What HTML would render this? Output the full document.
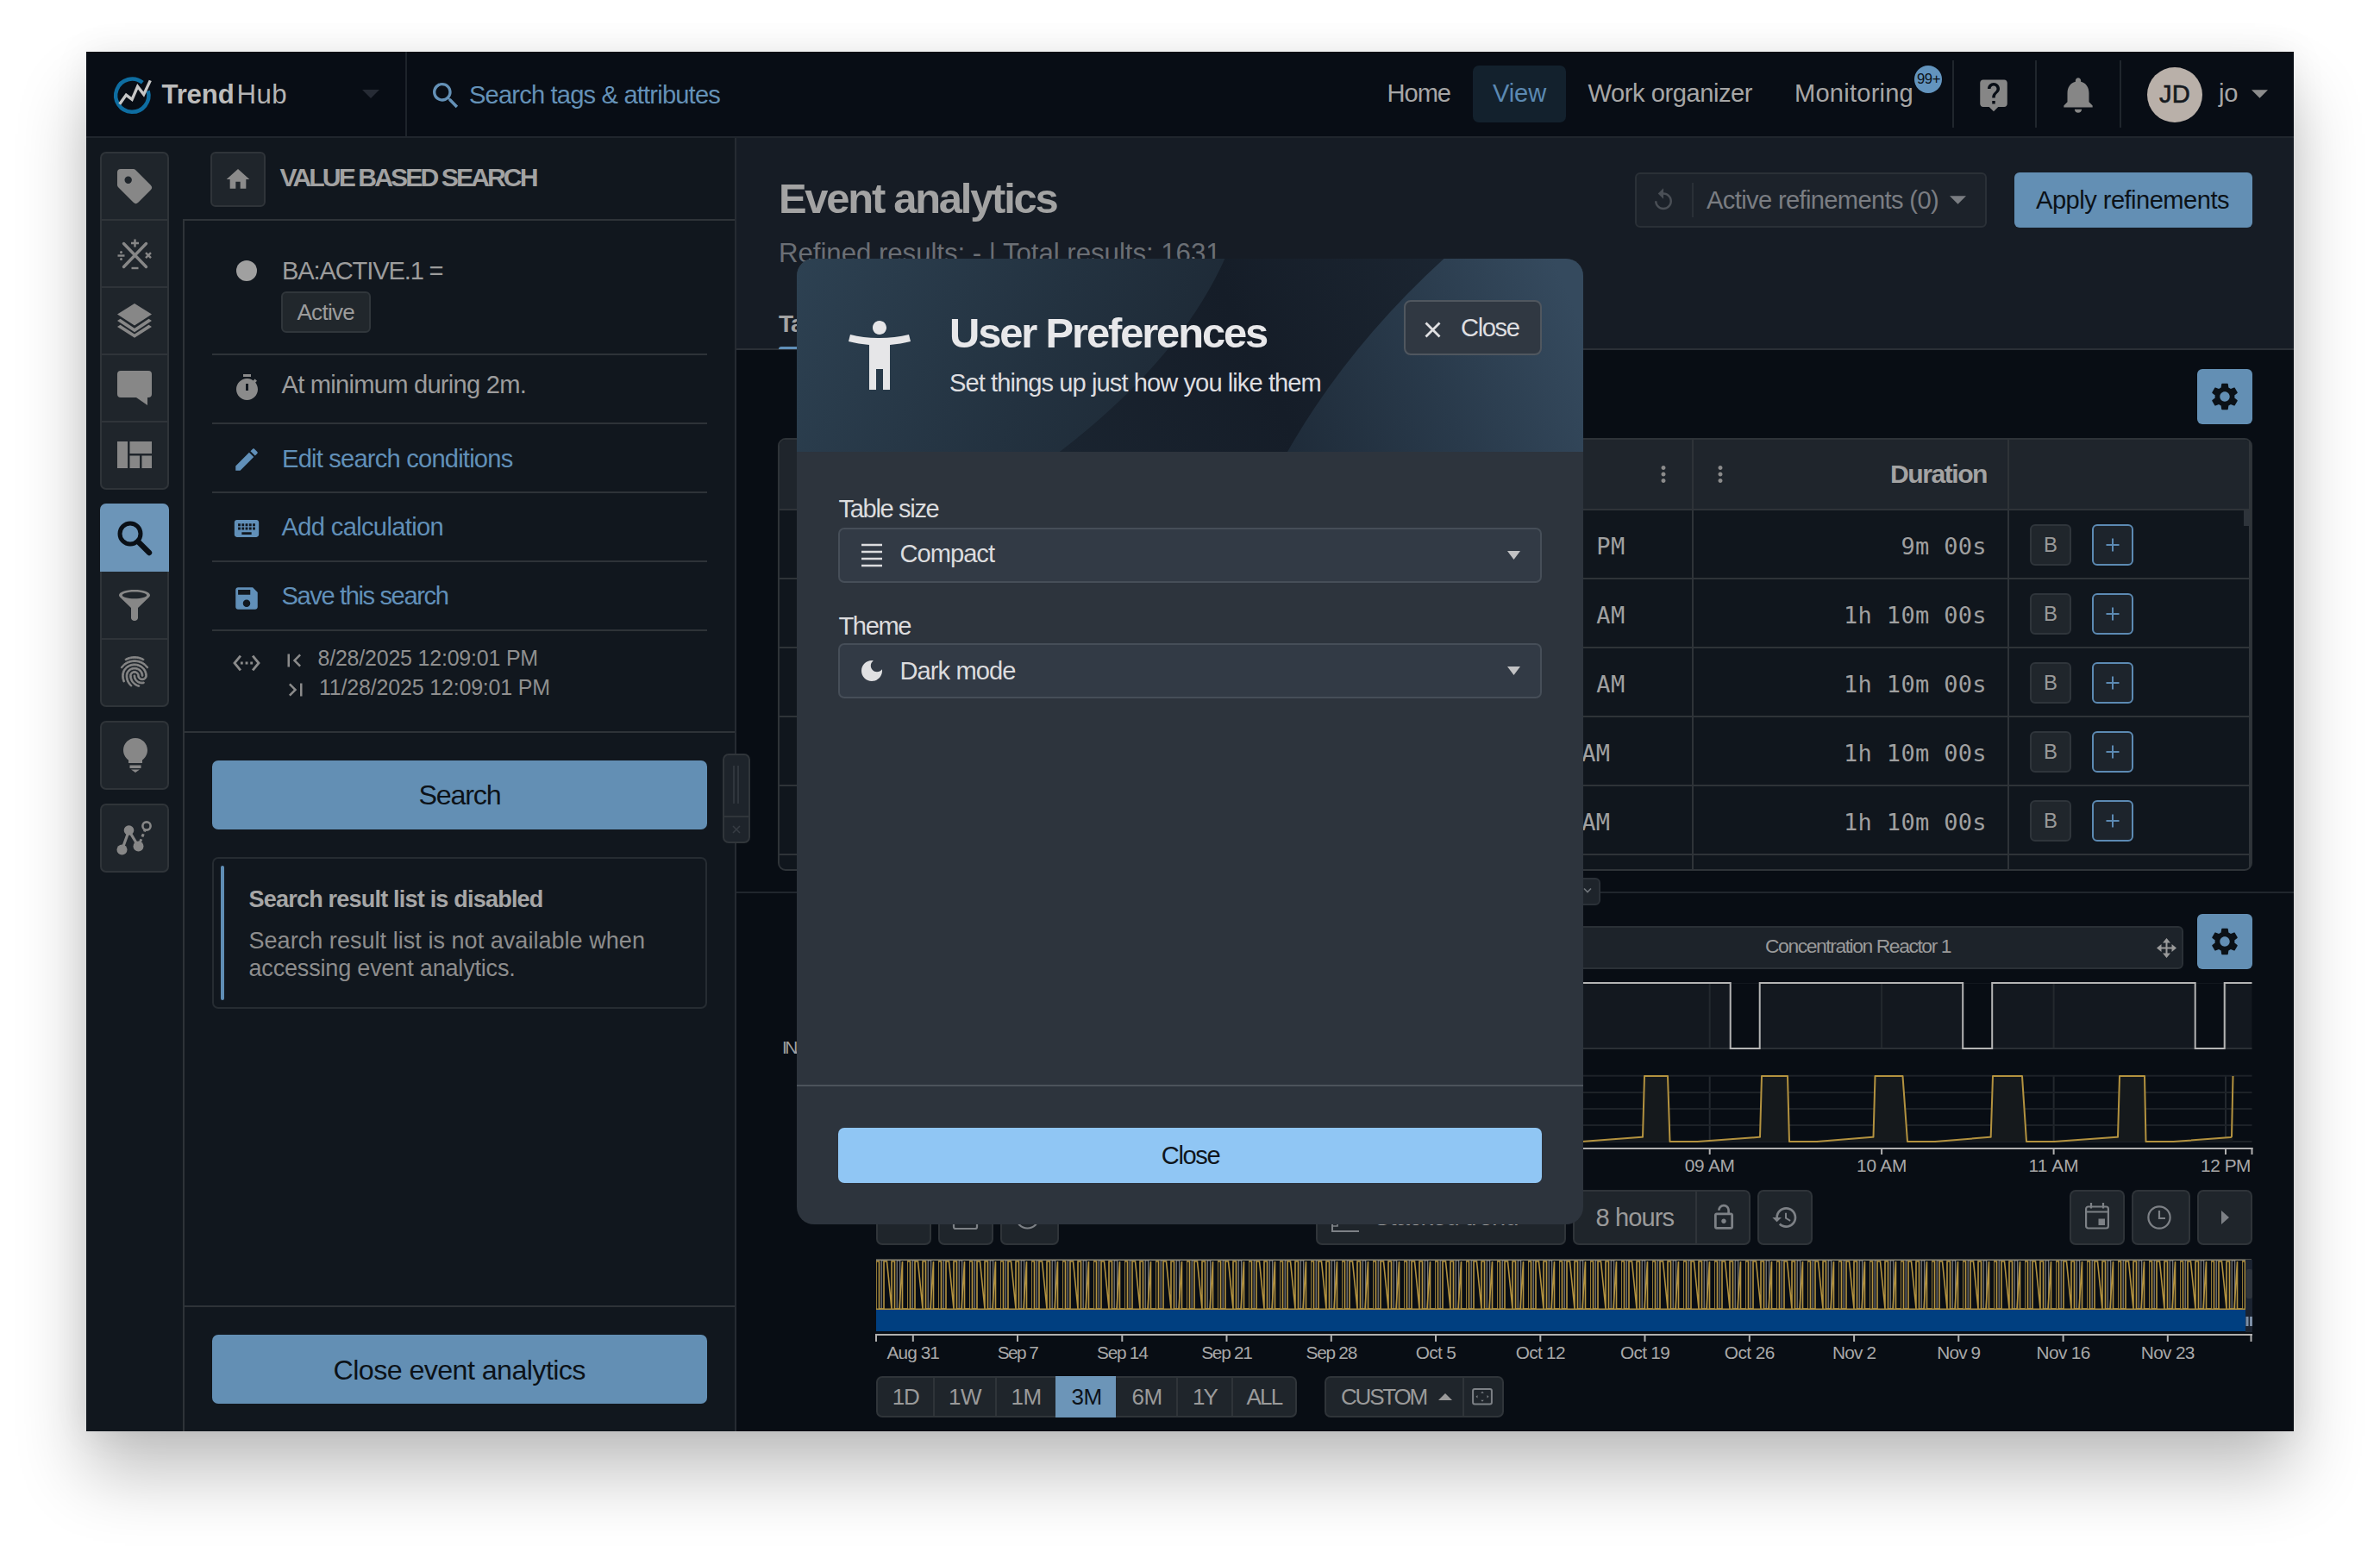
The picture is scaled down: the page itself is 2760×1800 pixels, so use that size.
<!DOCTYPE html>
<html lang="en">
<head>
<meta charset="utf-8">
<title>TrendHub - Event analytics</title>
<style>
*{box-sizing:border-box;margin:0;padding:0}
html,body{width:2760px;height:1800px;background:#fff;overflow:hidden}
body{position:relative;font-family:"Liberation Sans",sans-serif;color:#9d9d9d}
#win{position:absolute;left:100px;top:60px;width:2560px;height:1600px;overflow:hidden;background:#080d14;box-shadow:0 50px 76px rgba(0,0,0,.24),0 0 40px rgba(0,0,0,.07)}
#in{position:absolute;left:-100px;top:-60px;width:2760px;height:1800px}
.a{position:absolute}
.t{position:absolute;white-space:nowrap;line-height:1}
.b{font-weight:bold}
svg{position:absolute;overflow:visible}
.btn{position:absolute;background:#1f252b;border:2px solid #2f3439;border-radius:7px}
.hl{position:absolute;height:2px;background:#2e3338}
.vl{position:absolute;width:2px;background:#2e3338}
.mono{font-family:"DejaVu Sans Mono","Liberation Mono",monospace}
</style>
</head>
<body>
<div id="win"><div id="in">

<!-- ================= HEADER ================= -->
<div class="a" style="left:100px;top:60px;width:2560px;height:98px;background:#080d15"></div>
<div class="hl" style="left:100px;top:158px;width:2560px;background:#20262d"></div>
<div class="vl" style="left:470px;top:60px;height:98px;background:#1d232a"></div>

<!-- logo -->
<svg style="left:130px;top:88px" width="48" height="48" viewBox="130 88 48 48">
  <path d="M171.660 105.440 A19.100 19.100 0 1 1 165.320 95.860" fill="none" stroke="#0e6da1" stroke-width="4.500"/>
  <path d="M138.7 120.7 L146.3 110.1 L153.1 115.4 L159.6 100.3 L166.7 109.6 L174.3 93.4" fill="none" stroke="#c6c6c6" stroke-width="3.4" stroke-linejoin="miter"/>
</svg>
<span class="t b" style="left:187.5px;top:93.6px;letter-spacing:-0.18px;font-size:31.20px;color:#bcbcbc">Trend</span>
<span class="t" style="left:274.5px;top:93.6px;letter-spacing:0.43px;font-size:31.20px;color:#b4b4b4">Hub</span>
<svg style="left:420px;top:104px" width="20" height="10" viewBox="0 0 20 10"><path d="M0 0h20L10 10z" fill="#262b35"/></svg>
<!-- search -->
<svg style="left:496.500px;top:90.500px" width="40" height="40" viewBox="0 0 24 24"><path fill="#6491b7" d="M15.5 14h-.79l-.28-.27C15.41 12.59 16 11.11 16 9.5 16 5.91 13.09 3 9.5 3S3 5.91 3 9.5 5.91 16 9.5 16c1.61 0 3.09-.59 4.23-1.57l.27.28v.79l5 4.99L20.49 19l-4.99-5zm-6 0C7.01 14 5 11.99 5 9.5S7.01 5 9.5 5 14 7.01 14 9.5 11.99 14 9.5 14z"/></svg>
<span class="t" style="left:544.0px;top:95.8px;letter-spacing:-0.82px;font-size:29.12px;color:#6491b7">Search tags &amp; attributes</span>
<!-- nav -->
<span class="t" style="left:1608.5px;top:93.8px;letter-spacing:-1.04px;font-size:29.12px;color:#a6a6a6">Home</span>
<div class="a" style="left:1708px;top:76px;width:108px;height:66px;background:#13212d;border-radius:7px"></div>
<span class="t" style="left:1731.0px;top:93.8px;letter-spacing:-0.14px;font-size:29.12px;color:#5b89b2">View</span>
<span class="t" style="left:1841.5px;top:93.8px;letter-spacing:-0.45px;font-size:29.12px;color:#a6a6a6">Work organizer</span>
<span class="t" style="left:2081.0px;top:93.8px;letter-spacing:0.21px;font-size:29.12px;color:#a6a6a6">Monitoring</span>
<div class="a" style="left:2220px;top:76px;width:32px;height:32px;border-radius:16px;background:#6394be"></div>
<span class="t" style="left:2223.0px;top:83.9px;letter-spacing:-0.40px;font-size:16.64px;color:#0b1118">99+</span>
<div class="vl" style="left:2264px;top:70px;height:78px;background:#20262d"></div>
<div class="vl" style="left:2360px;top:70px;height:78px;background:#20262d"></div>
<div class="vl" style="left:2458px;top:70px;height:78px;background:#20262d"></div>
<svg style="left:2291px;top:89px" width="42" height="42" viewBox="0 0 24 24"><path fill="#868686" d="M19 2H5c-1.11 0-2 .9-2 2v14c0 1.1.89 2 2 2h4l3 3 3-3h4c1.1 0 2-.9 2-2V4c0-1.1-.9-2-2-2zm-6 16h-2v-2h2v2zm2.07-7.75l-.9.92C13.45 11.9 13 12.5 13 14h-2v-.5c0-1.1.45-2.1 1.17-2.83l1.24-1.26c.37-.36.59-.86.59-1.41 0-1.1-.9-2-2-2s-2 .9-2 2H8c0-2.21 1.79-4 4-4s4 1.79 4 4c0 .88-.36 1.68-.93 2.25z"/></svg>
<svg style="left:2385px;top:85px" width="50" height="50" viewBox="0 0 24 24"><path fill="#868686" d="M12 22c1.1 0 2-.9 2-2h-4c0 1.1.89 2 2 2zm6-6v-5c0-3.07-1.64-5.64-4.5-6.32V4c0-.83-.67-1.5-1.5-1.5s-1.5.67-1.5 1.5v.68C7.63 5.36 6 7.92 6 11v5l-2 2v1h16v-1l-2-2z"/></svg>
<div class="a" style="left:2490px;top:78px;width:64px;height:64px;border-radius:32px;background:#b9b0a9"></div>
<span class="t" style="left:2504.0px;top:95.3px;letter-spacing:0.21px;font-size:29.12px;color:#151a20;-webkit-text-stroke:.6px #151a20">JD</span>
<span class="t" style="left:2573.0px;top:93.8px;letter-spacing:-0.34px;font-size:29.12px;color:#a6a6a6">jo</span>
<svg style="left:2611px;top:104px" width="19" height="10" viewBox="0 0 20 10"><path d="M0 0h20L10 10z" fill="#8c8c8c"/></svg>


<!-- ================= SIDEBAR + LEFT PANEL BG ================= -->
<div class="a" style="left:100px;top:160px;width:752px;height:1500px;background:#11171e"></div>
<div class="vl" style="left:852px;top:160px;height:1500px;background:#262b32"></div>

<!-- sidebar groups -->
<div class="btn" style="left:116px;top:176px;width:80px;height:392px;border-radius:7px"></div>
<div class="hl" style="left:118px;top:254px;width:76px;background:#2f3439"></div>
<div class="hl" style="left:118px;top:332px;width:76px;background:#2f3439"></div>
<div class="hl" style="left:118px;top:410px;width:76px;background:#2f3439"></div>
<div class="hl" style="left:118px;top:488px;width:76px;background:#2f3439"></div>
<div class="btn" style="left:116px;top:584px;width:80px;height:236px;border-radius:7px"></div>
<div class="a" style="left:116px;top:584px;width:80px;height:79px;background:#6c95b8;border-radius:7px 7px 0 0"></div>
<div class="hl" style="left:118px;top:740px;width:76px;background:#2f3439"></div>
<div class="btn" style="left:116px;top:836px;width:80px;height:80px;border-radius:7px"></div>
<div class="btn" style="left:116px;top:932px;width:80px;height:80px;border-radius:7px"></div>
<!-- tag -->
<svg style="left:136px;top:196px" width="40" height="40" viewBox="0 0 40 40"><path fill="#878787" fill-rule="evenodd" d="M4 0H18.500a4 4 0 0 1 2.800 1.200L38.800 18.700a4 4 0 0 1 0 5.600L24.300 38.800a4 4 0 0 1-5.600 0L1.200 21.300A4 4 0 0 1 0 18.500V4a4 4 0 0 1 4-4ZM12.700 8.500a4.200 4.200 0 1 0 0 8.400a4.200 4.200 0 1 0 0-8.400Z"/></svg>
<!-- calc -->
<svg style="left:136px;top:275.500px" width="40" height="40" viewBox="0 0 40 40"><g stroke="#878787" stroke-width="3.4" stroke-linecap="round" fill="none"><path d="M7.5 6.5 L33.5 33.5 M33.5 6.5 L7.5 33.5"/></g><g stroke="#878787" stroke-width="2.4" fill="none"><path d="M20.5 1.5v9M16 6h9"/><path d="M16.5 35h8"/><path d="M0.5 20.5h8"/><path d="M33 17.2l6 6M39 17.2l-6 6"/></g><circle cx="4.5" cy="16.6" r="1.5" fill="#878787"/><circle cx="4.5" cy="24.4" r="1.5" fill="#878787"/></svg>
<!-- layers -->
<svg style="left:136px;top:352px" width="40" height="40" viewBox="0 0 40 40"><path fill="#878787" d="M20 0L40 12.600 20 25.600 0 12.600ZM0 20L20 33.300 40 20 36.500 17.800 20 28.800 3.500 17.800ZM0 27L20 39.800 40 27 36.500 24.800 20 35.400 3.500 24.800Z"/></svg>
<!-- chat -->
<svg style="left:136px;top:430px" width="40" height="40" viewBox="0 0 40 40"><path fill="#878787" d="M4 0h32a4 4 0 0 1 4 4v23a4 4 0 0 1-4 4h-1v9L22 31H4a4 4 0 0 1-4-4V4a4 4 0 0 1 4-4z"/></svg>
<!-- quilt -->
<svg style="left:136px;top:512px" width="40" height="31" viewBox="0 0 40 31"><path fill="#878787" d="M0 0h12v31H0zM14.500 0H40v14H14.500zM14.500 16.500h11.500V31H14.500zM28.500 16.500H40V31H28.500z"/></svg>
<!-- search (active) -->
<svg style="left:136px;top:604px" width="40" height="40" viewBox="0 0 40 40"><circle cx="15" cy="15" r="12" fill="none" stroke="#0a1017" stroke-width="5"/><path d="M24 24L37 37" stroke="#0a1017" stroke-width="6.400" stroke-linecap="round"/></svg>
<!-- funnel -->
<svg style="left:138px;top:684px" width="36" height="36" viewBox="0 0 36 36"><path fill="#878787" d="M18 0C8 0 0 2.600 0 6.200c0 1.100.700 2.100 1.800 3L14 21v11.500c0 2 1.800 3.500 4 3.500s4-1.500 4-3.500V21L34.200 9.200C35.300 8.300 36 7.300 36 6.200 36 2.600 28 0 18 0zm0 2.600c8.200 0 14.200 2 14.200 3.800S26.200 10.200 18 10.200 3.800 8.200 3.800 6.400 9.800 2.600 18 2.600z"/></svg>
<!-- fingerprint -->
<svg style="left:135px;top:758px" width="42" height="42" viewBox="0 0 24 24"><path fill="#878787" stroke="#878787" stroke-width=".500" d="M17.810 4.470c-.080 0-.160-.020-.230-.060C15.660 3.420 14 3 12.010 3c-1.980 0-3.860.470-5.570 1.410-.240.130-.540.040-.680-.200-.130-.240-.040-.550.200-.680C7.820 2.520 9.860 2 12.010 2c2.130 0 3.990.470 6.030 1.520.250.130.340.430.210.670-.090.180-.260.280-.440.280zM3.500 9.720c-.100 0-.200-.030-.290-.090-.230-.160-.280-.470-.120-.700.990-1.400 2.250-2.500 3.750-3.270C9.980 4.040 14 4.030 17.150 5.650c1.500.770 2.760 1.860 3.750 3.250.160.220.110.540-.120.700-.230.160-.540.110-.700-.120-.900-1.260-2.040-2.250-3.390-2.940-2.870-1.470-6.540-1.470-9.400.010-1.360.700-2.500 1.700-3.400 2.960-.080.140-.230.210-.390.210zm6.250 12.070c-.130 0-.260-.050-.350-.150-.870-.870-1.340-1.430-2.010-2.640-.690-1.230-1.050-2.730-1.050-4.340 0-2.970 2.540-5.390 5.660-5.390s5.660 2.420 5.660 5.390c0 .280-.220.500-.500.500s-.500-.220-.500-.500c0-2.420-2.090-4.390-4.660-4.390-2.570 0-4.660 1.970-4.660 4.390 0 1.440.320 2.770.930 3.850.640 1.150 1.080 1.640 1.850 2.420.190.200.190.510 0 .710-.110.100-.240.150-.370.150zm7.170-1.850c-1.190 0-2.240-.300-3.100-.890-1.490-1.010-2.380-2.650-2.380-4.390 0-.280.220-.500.500-.500s.500.220.500.500c0 1.410.720 2.740 1.940 3.560.710.480 1.540.710 2.540.710.240 0 .640-.030 1.040-.100.270-.050.530.130.580.410.050.270-.130.530-.410.580-.570.110-1.070.120-1.210.120zM14.910 22c-.040 0-.090-.010-.130-.020-1.590-.440-2.630-1.030-3.720-2.100-1.400-1.390-2.170-3.240-2.170-5.220 0-1.620 1.380-2.940 3.080-2.940 1.700 0 3.080 1.320 3.080 2.940 0 1.070.930 1.940 2.080 1.940s2.080-.870 2.080-1.940c0-3.770-3.250-6.830-7.250-6.830-2.840 0-5.440 1.580-6.610 4.030-.390.810-.590 1.760-.590 2.800 0 .780.070 2.010.670 3.610.100.260-.030.550-.290.640-.260.100-.550-.040-.640-.290-.490-1.310-.730-2.610-.730-3.960 0-1.200.230-2.290.680-3.240 1.330-2.790 4.280-4.600 7.510-4.600 4.550 0 8.250 3.510 8.250 7.830 0 1.620-1.380 2.940-3.080 2.940s-3.080-1.320-3.080-2.940c0-1.070-.930-1.940-2.080-1.940s-2.080.870-2.080 1.940c0 1.710.660 3.310 1.870 4.510.950.940 1.860 1.460 3.270 1.850.270.070.420.350.350.610-.050.230-.260.380-.470.380z"/></svg>
<!-- lightbulb -->
<svg style="left:143px;top:856px" width="28" height="40" viewBox="0 0 28 40"><path fill="#878787" d="M14 0C6.300 0 0 6.300 0 14c0 4.800 2.400 9 6 11.500V29h16v-3.500C25.600 23 28 18.800 28 14 28 6.300 21.700 0 14 0zM7.500 31.500h13v3.500h-13zM9 36.500h10L14 40z"/></svg>
<!-- timeline nodes -->
<svg style="left:135px;top:952px" width="42" height="40" viewBox="0 0 42 40"><g stroke="#878787" fill="none"><path d="M6.500 33.500L14.500 11.500 25.500 29.500" stroke-width="3.200"/><path d="M27.500 24.500L33 11" stroke-width="3" stroke-dasharray="3.500 3"/><circle cx="35" cy="6" r="4.600" stroke-width="2.600"/></g><circle cx="6.500" cy="33.500" r="6" fill="#878787"/><circle cx="14.500" cy="11" r="5.800" fill="#878787"/><circle cx="25.500" cy="29.500" r="6" fill="#878787"/></svg>


<!-- left panel -->
<div class="btn" style="left:244px;top:176px;width:64px;height:64px;border-radius:6px"></div>
<svg style="left:260px;top:192px" width="32" height="32" viewBox="0 0 24 24"><path fill="#8b8b8b" d="M10 20v-6h4v6h5v-8h3L12 3 2 12h3v8z"/></svg>
<span class="t b" style="left:324.5px;top:190.5px;letter-spacing:-2.92px;font-size:30.16px;color:#a2a2a2">VALUE BASED SEARCH</span>
<div class="hl" style="left:212px;top:254px;width:640px"></div>
<div class="vl" style="left:212px;top:254px;height:1406px"></div>
<div class="a" style="left:274px;top:302px;width:24px;height:24px;border-radius:12px;background:#a0a0a0"></div>
<span class="t" style="left:327.0px;top:299.8px;letter-spacing:-1.15px;font-size:29.12px;color:#9c9c9c">BA:ACTIVE.1 =</span>
<div class="a" style="left:326px;top:338px;width:104px;height:48px;background:#21272c;border:2px solid #30363b;border-radius:6px"></div>
<span class="t" style="left:344.5px;top:348.5px;letter-spacing:-0.72px;font-size:26.00px;color:#9c9c9c">Active</span>
<div class="hl" style="left:246px;top:410px;width:574px"></div>
<!-- timer -->
<svg style="left:272.500px;top:433.500px" width="28" height="32" viewBox="0 0 28 32"><path fill="#8b8b8b" d="M9 0h9v3H9zM13.500 5C20.400 5 26 10.600 26 17.500S20.400 30 13.500 30 1 24.400 1 17.500 6.600 5 13.500 5zM12 11v8h3v-8zM22.500 5.500l2.500 2.300-2.200 2.200-2.300-2.300z"/></svg>
<span class="t" style="left:326.5px;top:431.8px;letter-spacing:-0.75px;font-size:29.12px;color:#9c9c9c">At minimum during 2m.</span>
<div class="hl" style="left:246px;top:490px;width:574px"></div>
<svg style="left:269px;top:516px" width="34" height="34" viewBox="0 0 24 24"><path fill="#6190b9" d="M3 17.250V21h3.750L17.810 9.940l-3.750-3.750L3 17.250zM20.710 7.040c.390-.390.390-1.020 0-1.410l-2.340-2.340c-.390-.390-1.020-.390-1.410 0l-1.830 1.830 3.750 3.750 1.830-1.830z"/></svg>
<span class="t" style="left:327.0px;top:517.8px;letter-spacing:-0.79px;font-size:29.12px;color:#6190b9">Edit search conditions</span>
<div class="hl" style="left:246px;top:570px;width:574px"></div>
<svg style="left:269px;top:596px" width="34" height="34" viewBox="0 0 24 24"><path fill="#6190b9" d="M20 5H4c-1.100 0-1.990.900-1.990 2L2 17c0 1.100.900 2 2 2h16c1.100 0 2-.900 2-2V7c0-1.100-.900-2-2-2zm-9 3h2v2h-2V8zm0 3h2v2h-2v-2zM8 8h2v2H8V8zm0 3h2v2H8v-2zm-1 2H5v-2h2v2zm0-3H5V8h2v2zm9 7H8v-2h8v2zm0-4h-2v-2h2v2zm0-3h-2V8h2v2zm3 3h-2v-2h2v2zm0-3h-2V8h2v2z"/></svg>
<span class="t" style="left:326.5px;top:597.3px;letter-spacing:-0.66px;font-size:29.12px;color:#6190b9">Add calculation</span>
<div class="hl" style="left:246px;top:650px;width:574px"></div>
<svg style="left:269px;top:676.500px" width="34" height="34" viewBox="0 0 24 24"><path fill="#6190b9" d="M17 3H5c-1.110 0-2 .900-2 2v14c0 1.100.890 2 2 2h14c1.100 0 2-.900 2-2V7l-4-4zm-5 16c-1.660 0-3-1.340-3-3s1.340-3 3-3 3 1.340 3 3-1.340 3-3 3zm3-10H5V5h10v4z"/></svg>
<span class="t" style="left:326.5px;top:677.3px;letter-spacing:-1.39px;font-size:29.12px;color:#6190b9">Save this search</span>
<div class="hl" style="left:246px;top:730px;width:574px"></div>
<svg style="left:268.500px;top:752px" width="34" height="34" viewBox="0 0 24 24"><path fill="#8b8b8b" d="M7.770 6.760L6.230 5.480.820 12l5.410 6.520 1.540-1.280L3.420 12l4.350-5.240zM7 13h2v-2H7v2zm10-2h-2v2h2v-2zm-6 2h2v-2h-2v2zm6.770-7.520l-1.540 1.280L20.580 12l-4.350 5.240 1.540 1.280L23.180 12l-5.410-6.520z"/></svg>
<svg style="left:326px;top:751px" width="30" height="30" viewBox="0 0 24 24"><path fill="#8b8b8b" d="M18.410 16.590L13.820 12l4.590-4.590L17 6l-6 6 6 6zM6 6h2v12H6z"/></svg>
<span class="t" style="left:368.5px;top:750.9px;letter-spacing:-0.19px;font-size:24.96px;color:#8f8f8f">8/28/2025 12:09:01 PM</span>
<svg style="left:328px;top:785px" width="30" height="30" viewBox="0 0 24 24"><path fill="#8b8b8b" d="M5.590 7.410L10.180 12l-4.590 4.590L7 18l6-6-6-6zM16 6h2v12h-2z"/></svg>
<span class="t" style="left:370.0px;top:784.9px;letter-spacing:-0.16px;font-size:24.96px;color:#8f8f8f">11/28/2025 12:09:01 PM</span>
<div class="hl" style="left:214px;top:848px;width:638px"></div>
<div class="a" style="left:246px;top:882px;width:574px;height:80px;background:#638fb4;border-radius:7px"></div>
<span class="t" style="left:485.5px;top:906.2px;letter-spacing:-1.19px;font-size:32.24px;color:#0c1218">Search</span>
<!-- resize handle -->
<div class="a" style="left:838px;top:874px;width:32px;height:104px;background:#1e242b;border:2px solid #30353a;border-radius:7px"></div>
<div class="hl" style="left:840px;top:946px;width:28px;background:#30353a"></div>
<div class="vl" style="left:850px;top:888px;height:44px;background:#30363d"></div>
<div class="vl" style="left:855px;top:888px;height:44px;background:#30363d"></div>
<svg style="left:847px;top:955px" width="14" height="14" viewBox="0 0 14 14"><path d="M3 3l8 8M11 3l-8 8" stroke="#363c43" stroke-width="1.600"/></svg>
<!-- info box -->
<div class="a" style="left:246px;top:994px;width:574px;height:176px;border:2px solid #262c32;border-radius:7px"></div>
<div class="a" style="left:256px;top:1004px;width:4px;height:156px;background:#5f8db5;border-radius:2px"></div>
<span class="t b" style="left:288.5px;top:1029.6px;letter-spacing:-0.80px;font-size:27.04px;color:#a6a6a6">Search result list is disabled</span>
<span class="t" style="left:288.5px;top:1077.6px;letter-spacing:0.03px;font-size:27.04px;color:#8d8d8d">Search result list is not available when</span>
<span class="t" style="left:288.5px;top:1109.6px;letter-spacing:-0.19px;font-size:27.04px;color:#8d8d8d">accessing event analytics.</span>
<div class="hl" style="left:214px;top:1514px;width:638px"></div>
<div class="a" style="left:246px;top:1548px;width:574px;height:80px;background:#638fb4;border-radius:7px"></div>
<span class="t" style="left:386.5px;top:1573.2px;letter-spacing:-0.58px;font-size:32.24px;color:#0c1218">Close event analytics</span>


<!-- ================= MAIN ================= -->
<div class="a" style="left:854px;top:160px;width:1806px;height:244px;background:#161c25"></div>
<div class="hl" style="left:854px;top:404px;width:1806px;background:#2a2f36"></div>

<span class="t b" style="left:903.0px;top:206.1px;letter-spacing:-2.23px;font-size:48.88px;color:#a3a3a3">Event analytics</span>
<span class="t" style="left:903.0px;top:277.6px;letter-spacing:-0.03px;font-size:31.20px;color:#6b6f75">Refined results: - | Total results: 1631</span>
<span class="t b" style="left:903.0px;top:361.7px;letter-spacing:-1.05px;font-size:28.08px;color:#a3a3a3">Table</span>
<div class="a" style="left:903px;top:401.500px;width:90px;height:3.500px;background:#6190b9;border-radius:4px 4px 0 0"></div>
<!-- refinements -->
<div class="a" style="left:1896px;top:200px;width:408px;height:64px;background:#1c222a;border:2px solid #2a3037;border-radius:6px"></div>
<svg style="left:1914px;top:217px" width="30" height="30" viewBox="0 0 24 24"><path fill="#4a4f56" d="M12 5V1L7 6l5 5V7c3.310 0 6 2.690 6 6s-2.690 6-6 6-6-2.690-6-6H4c0 4.420 3.580 8 8 8s8-3.580 8-8-3.580-8-8-8z"/></svg>
<div class="vl" style="left:1962px;top:212px;height:40px;background:#2a3037"></div>
<span class="t" style="left:1979.0px;top:218.3px;letter-spacing:-0.64px;font-size:29.12px;color:#7a7d82">Active refinements (0)</span>
<svg style="left:2261px;top:227px" width="19" height="10" viewBox="0 0 20 10"><path d="M0 0h20L10 10z" fill="#7a7d82"/></svg>
<div class="a" style="left:2336px;top:200px;width:276px;height:64px;background:#638fb4;border-radius:6px"></div>
<span class="t" style="left:2361.0px;top:218.3px;letter-spacing:-0.53px;font-size:29.12px;color:#0c1218">Apply refinements</span>
<!-- gear 1 -->
<div class="a" style="left:2548px;top:428px;width:64px;height:64px;background:#638fb4;border-radius:6px"></div>
<svg style="left:2561px;top:441px" width="38" height="38" viewBox="0 0 24 24"><path fill="#0b1117" d="M19.140 12.940c.040-.300.060-.610.060-.940 0-.320-.020-.640-.070-.940l2.030-1.580c.180-.140.230-.410.120-.610l-1.920-3.320c-.120-.220-.370-.290-.590-.220l-2.390.960c-.500-.380-1.030-.700-1.620-.940l-.360-2.540c-.040-.240-.240-.410-.480-.410h-3.840c-.240 0-.430.170-.470.410l-.360 2.540c-.590.240-1.130.570-1.620.940l-2.390-.960c-.220-.080-.470 0-.590.220L2.740 8.870c-.120.210-.080.470.120.610l2.030 1.580c-.050.300-.090.630-.090.940s.020.640.070.940l-2.030 1.580c-.180.140-.230.410-.120.610l1.920 3.320c.120.220.370.290.590.220l2.390-.960c.500.380 1.030.700 1.620.940l.360 2.540c.050.240.240.410.480.410h3.840c.240 0 .440-.170.470-.410l.360-2.540c.590-.240 1.130-.560 1.620-.940l2.390.960c.220.080.470 0 .590-.220l1.920-3.320c.120-.220.070-.470-.120-.610l-2.010-1.580zM12 15.600c-1.980 0-3.600-1.620-3.600-3.600s1.620-3.600 3.600-3.600 3.600 1.620 3.600 3.600-1.620 3.600-3.600 3.600z"/></svg>
<!-- table -->
<div class="a" style="left:902px;top:508px;width:1710px;height:502px;background:#10161d;border:2px solid #2e3338;border-radius:9px;overflow:hidden">
  <div class="a" style="left:0;top:0;width:1710px;height:81px;background:#1f252c"></div>
</div>
<div class="hl" style="left:904px;top:590px;width:1706px"></div>
<div class="hl" style="left:904px;top:670px;width:1706px"></div>
<div class="hl" style="left:904px;top:750px;width:1706px"></div>
<div class="hl" style="left:904px;top:830px;width:1706px"></div>
<div class="hl" style="left:904px;top:910px;width:1706px"></div>
<div class="hl" style="left:904px;top:990px;width:1706px"></div>
<div class="vl" style="left:1962px;top:510px;height:498px"></div>
<div class="vl" style="left:2328px;top:510px;height:498px"></div>
<div class="vl" style="left:2608px;top:512px;height:494px;background:#30353a"></div>
<div class="a" style="left:2602px;top:592px;width:7px;height:18px;background:#2e343b"></div>
<svg style="left:1914px;top:535px" width="30" height="30" viewBox="0 0 24 24"><path fill="#8b8b8b" d="M12 8c1.100 0 2-.900 2-2s-.900-2-2-2-2 .900-2 2 .900 2 2 2zm0 2c-1.100 0-2 .900-2 2s.900 2 2 2 2-.900 2-2-.900-2-2-2zm0 6c-1.100 0-2 .900-2 2s.900 2 2 2 2-.900 2-2-.900-2-2-2z"/></svg>
<svg style="left:1980px;top:535px" width="30" height="30" viewBox="0 0 24 24"><path fill="#8b8b8b" d="M12 8c1.100 0 2-.900 2-2s-.900-2-2-2-2 .900-2 2 .900 2 2 2zm0 2c-1.100 0-2 .900-2 2s.900 2 2 2 2-.900 2-2-.900-2-2-2zm0 6c-1.100 0-2 .900-2 2s.900 2 2 2 2-.900 2-2-.900-2-2-2z"/></svg>
<span class="t b" style="left:2192.0px;top:534.5px;letter-spacing:-1.50px;font-size:30.16px;color:#a3a3a3">Duration</span>
<span class="t mono" style="left:1519.4px;top:619.6px;letter-spacing:0.34px;font-size:27px;color:#a0a0a0">11/28/2025 12:00:00 PM</span>
<span class="t mono" style="left:2204.4px;top:619.6px;letter-spacing:0.34px;font-size:27px;color:#a0a0a0">9m 00s</span>
<div class="a" style="left:2354px;top:608px;width:48px;height:48px;background:#20262c;border:2px solid #2f353b;border-radius:6px"></div>
<span class="t" style="left:2370.0px;top:620.3px;font-size:23.92px;color:#9a9a9a">B</span>
<div class="a" style="left:2426px;top:608px;width:48px;height:48px;background:#1d242c;border:2px solid #5c8ab3;border-radius:6px"></div>
<svg style="left:2442px;top:624px" width="16" height="16" viewBox="0 0 16 16"><path d="M8 0.500v15M0.500 8h15" stroke="#5c8ab3" stroke-width="2"/></svg>
<span class="t mono" style="left:1519.4px;top:699.6px;letter-spacing:0.34px;font-size:27px;color:#a0a0a0">11/28/2025 12:00:00 AM</span>
<span class="t mono" style="left:2138.0px;top:699.6px;letter-spacing:0.34px;font-size:27px;color:#a0a0a0">1h 10m 00s</span>
<div class="a" style="left:2354px;top:688px;width:48px;height:48px;background:#20262c;border:2px solid #2f353b;border-radius:6px"></div>
<span class="t" style="left:2370.0px;top:700.3px;font-size:23.92px;color:#9a9a9a">B</span>
<div class="a" style="left:2426px;top:688px;width:48px;height:48px;background:#1d242c;border:2px solid #5c8ab3;border-radius:6px"></div>
<svg style="left:2442px;top:704px" width="16" height="16" viewBox="0 0 16 16"><path d="M8 0.500v15M0.500 8h15" stroke="#5c8ab3" stroke-width="2"/></svg>
<span class="t mono" style="left:1519.4px;top:779.6px;letter-spacing:0.34px;font-size:27px;color:#a0a0a0">11/28/2025 12:00:00 AM</span>
<span class="t mono" style="left:2138.0px;top:779.6px;letter-spacing:0.34px;font-size:27px;color:#a0a0a0">1h 10m 00s</span>
<div class="a" style="left:2354px;top:768px;width:48px;height:48px;background:#20262c;border:2px solid #2f353b;border-radius:6px"></div>
<span class="t" style="left:2370.0px;top:780.3px;font-size:23.92px;color:#9a9a9a">B</span>
<div class="a" style="left:2426px;top:768px;width:48px;height:48px;background:#1d242c;border:2px solid #5c8ab3;border-radius:6px"></div>
<svg style="left:2442px;top:784px" width="16" height="16" viewBox="0 0 16 16"><path d="M8 0.500v15M0.500 8h15" stroke="#5c8ab3" stroke-width="2"/></svg>
<span class="t mono" style="left:1518.9px;top:859.6px;letter-spacing:0.34px;font-size:27px;color:#a0a0a0">11/28/2025 2:00:00 AM</span>
<span class="t mono" style="left:2138.0px;top:859.6px;letter-spacing:0.34px;font-size:27px;color:#a0a0a0">1h 10m 00s</span>
<div class="a" style="left:2354px;top:848px;width:48px;height:48px;background:#20262c;border:2px solid #2f353b;border-radius:6px"></div>
<span class="t" style="left:2370.0px;top:860.3px;font-size:23.92px;color:#9a9a9a">B</span>
<div class="a" style="left:2426px;top:848px;width:48px;height:48px;background:#1d242c;border:2px solid #5c8ab3;border-radius:6px"></div>
<svg style="left:2442px;top:864px" width="16" height="16" viewBox="0 0 16 16"><path d="M8 0.500v15M0.500 8h15" stroke="#5c8ab3" stroke-width="2"/></svg>
<span class="t mono" style="left:1518.9px;top:939.6px;letter-spacing:0.34px;font-size:27px;color:#a0a0a0">11/28/2025 2:00:00 AM</span>
<span class="t mono" style="left:2138.0px;top:939.6px;letter-spacing:0.34px;font-size:27px;color:#a0a0a0">1h 10m 00s</span>
<div class="a" style="left:2354px;top:928px;width:48px;height:48px;background:#20262c;border:2px solid #2f353b;border-radius:6px"></div>
<span class="t" style="left:2370.0px;top:940.3px;font-size:23.92px;color:#9a9a9a">B</span>
<div class="a" style="left:2426px;top:928px;width:48px;height:48px;background:#1d242c;border:2px solid #5c8ab3;border-radius:6px"></div>
<svg style="left:2442px;top:944px" width="16" height="16" viewBox="0 0 16 16"><path d="M8 0.500v15M0.500 8h15" stroke="#5c8ab3" stroke-width="2"/></svg>

<!-- splitter line + chevron -->
<div class="hl" style="left:854px;top:1034px;width:1806px;background:#20262d"></div>
<div class="a" style="left:1816px;top:1018px;width:40px;height:32px;background:#1e242b;border:2px solid #2b3138;border-radius:6px"></div>
<svg style="left:1836px;top:1029px" width="10" height="8" viewBox="0 0 10 8"><path d="M1 1.500l4 4 4-4" fill="none" stroke="#70757b" stroke-width="1.600"/></svg>
<span class="t" style="left:907.0px;top:1204.9px;letter-spacing:-2.62px;font-size:20.80px;color:#a0a0a0">INACTIVE</span>
<!-- reactor bar -->
<div class="a" style="left:1016px;top:1074px;width:1516px;height:50px;background:#1d232a;border:2px solid #2a3036;border-radius:6px"></div>
<span class="t" style="left:2047.0px;top:1086.1px;letter-spacing:-1.43px;font-size:22.88px;color:#9a9a9a">Concentration Reactor 1</span>
<svg style="left:2501px;top:1088px" width="23" height="23" viewBox="0 0 23 23"><path d="M11.500 3.500V19.500M3.500 11.500H19.500" stroke="#9a9a9a" stroke-width="2" fill="none"/><path fill="#9a9a9a" d="M11.500 0L16 5.500H7ZM11.500 23L16 17.500H7ZM0 11.500L5.500 7V16ZM23 11.500L17.500 7V16Z"/></svg>
<div class="a" style="left:2548px;top:1060px;width:64px;height:64px;background:#638fb4;border-radius:6px"></div>
<svg style="left:2561px;top:1073px" width="38" height="38" viewBox="0 0 24 24"><path fill="#0b1117" d="M19.140 12.940c.040-.300.060-.610.060-.940 0-.320-.020-.640-.070-.940l2.030-1.580c.180-.140.230-.410.120-.610l-1.920-3.320c-.120-.220-.370-.290-.590-.220l-2.390.960c-.500-.380-1.030-.700-1.620-.940l-.360-2.540c-.040-.240-.240-.410-.480-.410h-3.840c-.240 0-.430.170-.470.410l-.360 2.540c-.590.240-1.130.570-1.620.940l-2.390-.960c-.220-.080-.470 0-.590.220L2.740 8.870c-.120.210-.080.470.120.610l2.030 1.580c-.050.300-.090.630-.090.940s.020.640.070.940l-2.030 1.580c-.180.140-.230.410-.120.610l1.920 3.320c.120.220.370.290.590.220l2.390-.960c.500.380 1.030.700 1.620.940l.360 2.540c.050.240.240.410.480.410h3.840c.240 0 .440-.170.470-.410l.360-2.540c.590-.240 1.130-.560 1.620-.940l2.390.960c.220.080.470 0 .590-.220l1.920-3.320c.120-.220.070-.470-.120-.610l-2.010-1.580zM12 15.600c-1.980 0-3.600-1.620-3.600-3.600s1.620-3.600 3.600-3.600 3.600 1.620 3.600 3.600-1.620 3.600-3.600 3.600z"/></svg>
<svg style="left:0;top:0" width="2760" height="1800" viewBox="0 0 2760 1800">
<rect x="1016.0" y="1140" width="1595.5" height="76" fill="#13181f"/>
<rect x="1198.2" y="1141" width="34.0" height="75" fill="#080d14"/>
<rect x="1467.7" y="1141" width="34.0" height="75" fill="#080d14"/>
<rect x="1737.2" y="1141" width="34.0" height="75" fill="#080d14"/>
<rect x="2006.7" y="1141" width="34.0" height="75" fill="#080d14"/>
<rect x="2276.2" y="1141" width="34.0" height="75" fill="#080d14"/>
<rect x="2545.7" y="1141" width="34.0" height="75" fill="#080d14"/>
<rect x="1183.9" y="1140" width="2" height="76" fill="#23282e"/>
<rect x="1183.9" y="1247" width="2" height="78" fill="#23282e"/>
<rect x="1383.3" y="1140" width="2" height="76" fill="#23282e"/>
<rect x="1383.3" y="1247" width="2" height="78" fill="#23282e"/>
<rect x="1582.8" y="1140" width="2" height="76" fill="#23282e"/>
<rect x="1582.8" y="1247" width="2" height="78" fill="#23282e"/>
<rect x="1782.2" y="1140" width="2" height="76" fill="#23282e"/>
<rect x="1782.2" y="1247" width="2" height="78" fill="#23282e"/>
<rect x="1981.7" y="1140" width="2" height="76" fill="#23282e"/>
<rect x="1981.7" y="1247" width="2" height="78" fill="#23282e"/>
<rect x="2181.1" y="1140" width="2" height="76" fill="#23282e"/>
<rect x="2181.1" y="1247" width="2" height="78" fill="#23282e"/>
<rect x="2380.6" y="1140" width="2" height="76" fill="#23282e"/>
<rect x="2380.6" y="1247" width="2" height="78" fill="#23282e"/>
<rect x="2580.0" y="1140" width="2" height="76" fill="#23282e"/>
<rect x="2580.0" y="1247" width="2" height="78" fill="#23282e"/>
<rect x="1016.0" y="1215" width="1595.5" height="2" fill="#2a2f35"/>
<path d="M1016.0 1140H1198.2V1216H1232.2V1140H1467.7V1216H1501.7V1140H1737.2V1216H1771.2V1140H2006.7V1216H2040.7V1140H2276.2V1216H2310.2V1140H2545.7V1216H2579.7V1140H2611.5" fill="none" stroke="#b4b4b4" stroke-width="2"/>
<rect x="1016.0" y="1246.7" width="1595.5" height="2" fill="#1d2228"/>
<rect x="1016.0" y="1266.0" width="1595.5" height="2" fill="#1d2228"/>
<rect x="1016.0" y="1285.0" width="1595.5" height="2" fill="#1d2228"/>
<rect x="1016.0" y="1304.0" width="1595.5" height="2" fill="#1d2228"/>
<rect x="1016.0" y="1323.0" width="1595.5" height="2" fill="#1d2228"/>
<path d="M1016.0 1322.0 L1094.0 1318.8 L1095.0 1318.8 L1097.0 1248.0 L1125.0 1248.0 L1127.0 1324.0 L1159.0 1324.0 L1229.0 1318.8 L1230.0 1318.8 L1232.0 1248.0 L1260.0 1248.0 L1262.0 1324.0 L1294.0 1324.0 L1364.0 1318.8 L1365.0 1318.8 L1367.0 1248.0 L1395.0 1248.0 L1397.0 1324.0 L1429.0 1324.0 L1499.0 1318.8 L1500.0 1318.8 L1502.0 1248.0 L1530.0 1248.0 L1532.0 1324.0 L1564.0 1324.0 L1634.0 1318.8 L1635.0 1318.8 L1637.0 1248.0 L1665.0 1248.0 L1667.0 1324.0 L1699.0 1324.0 L1769.0 1318.8 L1770.0 1318.8 L1772.0 1248.0 L1800.0 1248.0 L1802.0 1324.0 L1834.0 1324.0 L1904.0 1318.8 L1905.0 1318.8 L1907.0 1248.0 L1934.0 1248.0 L1936.5 1324.0 L1968.5 1324.0 L2040.0 1318.8 L2041.0 1318.8 L2043.0 1248.0 L2073.0 1248.0 L2075.0 1324.0 L2107.0 1324.0 L2171.5 1318.8 L2172.5 1318.8 L2174.5 1248.0 L2206.5 1248.0 L2212.0 1324.0 L2244.0 1324.0 L2307.7 1318.8 L2308.7 1318.8 L2311.0 1248.0 L2345.0 1248.0 L2350.0 1324.0 L2382.0 1324.0 L2455.0 1318.8 L2456.0 1318.8 L2458.0 1248.0 L2487.0 1248.0 L2488.5 1324.0 L2520.5 1324.0 L2587.0 1319.0 L2588.0 1318.0 L2589.5 1248.0 L2589.500 1324 L1016.0 1324Z" fill="#15191c" stroke="none"/>
<path d="M1016.0 1322.0 L1094.0 1318.8 L1095.0 1318.8 L1097.0 1248.0 L1125.0 1248.0 L1127.0 1324.0 L1159.0 1324.0 L1229.0 1318.8 L1230.0 1318.8 L1232.0 1248.0 L1260.0 1248.0 L1262.0 1324.0 L1294.0 1324.0 L1364.0 1318.8 L1365.0 1318.8 L1367.0 1248.0 L1395.0 1248.0 L1397.0 1324.0 L1429.0 1324.0 L1499.0 1318.8 L1500.0 1318.8 L1502.0 1248.0 L1530.0 1248.0 L1532.0 1324.0 L1564.0 1324.0 L1634.0 1318.8 L1635.0 1318.8 L1637.0 1248.0 L1665.0 1248.0 L1667.0 1324.0 L1699.0 1324.0 L1769.0 1318.8 L1770.0 1318.8 L1772.0 1248.0 L1800.0 1248.0 L1802.0 1324.0 L1834.0 1324.0 L1904.0 1318.8 L1905.0 1318.8 L1907.0 1248.0 L1934.0 1248.0 L1936.5 1324.0 L1968.5 1324.0 L2040.0 1318.8 L2041.0 1318.8 L2043.0 1248.0 L2073.0 1248.0 L2075.0 1324.0 L2107.0 1324.0 L2171.5 1318.8 L2172.5 1318.8 L2174.5 1248.0 L2206.5 1248.0 L2212.0 1324.0 L2244.0 1324.0 L2307.7 1318.8 L2308.7 1318.8 L2311.0 1248.0 L2345.0 1248.0 L2350.0 1324.0 L2382.0 1324.0 L2455.0 1318.8 L2456.0 1318.8 L2458.0 1248.0 L2487.0 1248.0 L2488.5 1324.0 L2520.5 1324.0 L2587.0 1319.0 L2588.0 1318.0 L2589.5 1248.0" fill="none" stroke="#b3923f" stroke-width="2" stroke-linejoin="round"/>
<rect x="1016.0" y="1331" width="1596.5" height="2" fill="#b0b0b0"/>
<rect x="1183.9" y="1331" width="2" height="8" fill="#b0b0b0"/>
<rect x="1383.3" y="1331" width="2" height="8" fill="#b0b0b0"/>
<rect x="1582.8" y="1331" width="2" height="8" fill="#b0b0b0"/>
<rect x="1782.2" y="1331" width="2" height="8" fill="#b0b0b0"/>
<rect x="1981.7" y="1331" width="2" height="8" fill="#b0b0b0"/>
<rect x="2181.1" y="1331" width="2" height="8" fill="#b0b0b0"/>
<rect x="2380.6" y="1331" width="2" height="8" fill="#b0b0b0"/>
<rect x="2580.0" y="1331" width="2" height="8" fill="#b0b0b0"/>
<rect x="2610.5" y="1331" width="2" height="8" fill="#b0b0b0"/>
<rect x="1015.0" y="1331" width="2" height="8" fill="#b0b0b0"/>
<defs><pattern id="ctx" x="1016" y="1461" width="36" height="58" patternUnits="userSpaceOnUse">
<path d="M6.200 57V1H9.700M24.200 57V1H27.700V57" stroke="#858585" stroke-width="1.100" fill="none"/>
<path d="M0 57V2H3.500V57H9V2H12.500L18 57V2H21.500V57H27L30.500 2V57H36" stroke="#b3923f" stroke-width="1.600" fill="none"/>
</pattern></defs>
<rect x="1016" y="1461" width="1595" height="58" fill="url(#ctx)"/>
<rect x="1016" y="1460.500" width="1595" height="1.500" fill="#8e8a78"/>
<rect x="1016" y="1517.500" width="1595" height="2" fill="#b3923f"/>
<rect x="1016" y="1519" width="1595" height="25" fill="#003f80"/>
<rect x="2604" y="1461" width="8" height="84" fill="#1b2330"/>
<rect x="2605" y="1472" width="7" height="34" rx="2" fill="#2e343c"/>
<rect x="2604.500" y="1527" width="3" height="11" fill="#7d8fa6"/><rect x="2609" y="1527" width="3" height="11" fill="#7d8fa6"/>
<rect x="1015" y="1547" width="1597" height="2" fill="#b0b0b0"/>
<rect x="1015.0" y="1547" width="2" height="9" fill="#b0b0b0"/>
<rect x="2609.5" y="1547" width="2" height="9" fill="#b0b0b0"/>
<rect x="1057.8" y="1547" width="2" height="9" fill="#b0b0b0"/>
<rect x="1179.0" y="1547" width="2" height="9" fill="#b0b0b0"/>
<rect x="1300.3" y="1547" width="2" height="9" fill="#b0b0b0"/>
<rect x="1421.5" y="1547" width="2" height="9" fill="#b0b0b0"/>
<rect x="1542.8" y="1547" width="2" height="9" fill="#b0b0b0"/>
<rect x="1664.0" y="1547" width="2" height="9" fill="#b0b0b0"/>
<rect x="1785.3" y="1547" width="2" height="9" fill="#b0b0b0"/>
<rect x="1906.5" y="1547" width="2" height="9" fill="#b0b0b0"/>
<rect x="2027.8" y="1547" width="2" height="9" fill="#b0b0b0"/>
<rect x="2149.1" y="1547" width="2" height="9" fill="#b0b0b0"/>
<rect x="2270.3" y="1547" width="2" height="9" fill="#b0b0b0"/>
<rect x="2391.6" y="1547" width="2" height="9" fill="#b0b0b0"/>
<rect x="2512.8" y="1547" width="2" height="9" fill="#b0b0b0"/>
</svg>
<span class="t" style="left:1953.7px;top:1341.9px;letter-spacing:-0.19px;font-size:20.80px;color:#a8a8a8">09 AM</span>
<span class="t" style="left:2153.1px;top:1341.9px;letter-spacing:-0.19px;font-size:20.80px;color:#a8a8a8">10 AM</span>
<span class="t" style="left:2352.6px;top:1341.9px;letter-spacing:0.12px;font-size:20.80px;color:#a8a8a8">11 AM</span>
<span class="t" style="left:2552.0px;top:1341.9px;letter-spacing:-0.42px;font-size:20.80px;color:#a8a8a8">12 PM</span>
<span class="t" style="left:1155.9px;top:1341.9px;letter-spacing:-0.19px;font-size:20.80px;color:#a8a8a8">05 AM</span>
<span class="t" style="left:1355.3px;top:1341.9px;letter-spacing:-0.19px;font-size:20.80px;color:#a8a8a8">06 AM</span>
<span class="t" style="left:1554.8px;top:1341.9px;letter-spacing:-0.19px;font-size:20.80px;color:#a8a8a8">07 AM</span>
<span class="t" style="left:1754.2px;top:1341.9px;letter-spacing:-0.19px;font-size:20.80px;color:#a8a8a8">08 AM</span>
<span class="t" style="left:1028.5px;top:1559.4px;letter-spacing:-0.90px;font-size:20.80px;color:#a8a8a8">Aug 31</span>
<span class="t" style="left:1156.8px;top:1559.4px;letter-spacing:-1.57px;font-size:20.80px;color:#a8a8a8">Sep 7</span>
<span class="t" style="left:1272.0px;top:1559.4px;letter-spacing:-1.24px;font-size:20.80px;color:#a8a8a8">Sep 14</span>
<span class="t" style="left:1393.2px;top:1559.4px;letter-spacing:-1.24px;font-size:20.80px;color:#a8a8a8">Sep 21</span>
<span class="t" style="left:1514.5px;top:1559.4px;letter-spacing:-1.24px;font-size:20.80px;color:#a8a8a8">Sep 28</span>
<span class="t" style="left:1641.8px;top:1559.4px;letter-spacing:-0.64px;font-size:20.80px;color:#a8a8a8">Oct 5</span>
<span class="t" style="left:1757.8px;top:1559.4px;letter-spacing:-0.71px;font-size:20.80px;color:#a8a8a8">Oct 12</span>
<span class="t" style="left:1879.0px;top:1559.4px;letter-spacing:-0.71px;font-size:20.80px;color:#a8a8a8">Oct 19</span>
<span class="t" style="left:1999.8px;top:1559.4px;letter-spacing:-0.54px;font-size:20.80px;color:#a8a8a8">Oct 26</span>
<span class="t" style="left:2125.1px;top:1559.4px;letter-spacing:-0.87px;font-size:20.80px;color:#a8a8a8">Nov 2</span>
<span class="t" style="left:2246.3px;top:1559.4px;letter-spacing:-0.87px;font-size:20.80px;color:#a8a8a8">Nov 9</span>
<span class="t" style="left:2361.6px;top:1559.4px;letter-spacing:-0.65px;font-size:20.80px;color:#a8a8a8">Nov 16</span>
<span class="t" style="left:2482.8px;top:1559.4px;letter-spacing:-0.65px;font-size:20.80px;color:#a8a8a8">Nov 23</span>

<!-- chart toolbar -->
<div class="btn" style="left:1016px;top:1380px;width:64px;height:64px"></div>
<div class="btn" style="left:1088px;top:1380px;width:64px;height:64px"></div>
<div class="btn" style="left:1160px;top:1380px;width:68px;height:64px"></div>
<svg style="left:1104px;top:1396px" width="32" height="32" viewBox="0 0 32 32"><rect x="2" y="3" width="27" height="26" rx="2" fill="none" stroke="#7d8186" stroke-width="2.200"/><path d="M8 21h15" stroke="#7d8186" stroke-width="2.200"/></svg>
<svg style="left:1176px;top:1396px" width="32" height="32" viewBox="0 0 32 32"><circle cx="15.500" cy="15.500" r="13" fill="none" stroke="#7d8186" stroke-width="2.200"/></svg>
<div class="btn" style="left:1526px;top:1380px;width:290px;height:64px"></div>
<svg style="left:1543px;top:1396px" width="34" height="34" viewBox="0 0 34 34"><path d="M2 2V32H33" fill="none" stroke="#7d8186" stroke-width="2"/><path d="M2 26H8V20H14V14H20V8H26" fill="none" stroke="#7d8186" stroke-width="1.600"/></svg>
<span class="t" style="left:1593.0px;top:1397.3px;letter-spacing:-0.93px;font-size:29.12px;color:#9a9a9a">Stacked trend</span>
<div class="btn" style="left:1824px;top:1380px;width:206px;height:64px"></div>
<div class="vl" style="left:1966px;top:1382px;height:60px;background:#2f3439"></div>
<span class="t" style="left:1850.5px;top:1397.8px;letter-spacing:-0.94px;font-size:29.12px;color:#9a9a9a">8 hours</span>
<svg style="left:1980.500px;top:1394px" width="36" height="36" viewBox="0 0 24 24"><path fill="#7d8186" d="M12 17c1.100 0 2-.900 2-2s-.900-2-2-2-2 .900-2 2 .900 2 2 2zm6-9h-1V6c0-2.760-2.240-5-5-5S7 3.240 7 6h1.900c0-1.710 1.390-3.100 3.100-3.100 1.710 0 3.100 1.390 3.100 3.100v2H6c-1.100 0-2 .900-2 2v10c0 1.100.900 2 2 2h12c1.100 0 2-.900 2-2V10c0-1.100-.900-2-2-2zm0 12H6V10h12v10z" transform="translate(12 12) scale(.92) translate(-12 -12)"/></svg>
<div class="btn" style="left:2038px;top:1380px;width:64px;height:64px"></div>
<svg style="left:2054px;top:1396px" width="32" height="32" viewBox="0 0 24 24"><path fill="#7d8186" d="M13 3c-4.970 0-9 4.030-9 9H1l3.890 3.890.070.140L9 12H6c0-3.870 3.130-7 7-7s7 3.130 7 7-3.130 7-7 7c-1.930 0-3.680-.790-4.940-2.060l-1.420 1.420C8.270 19.990 10.510 21 13 21c4.970 0 9-4.030 9-9s-4.030-9-9-9zm-1 5v5l4.280 2.540.720-1.210-3.500-2.080V8H12z"/></svg>
<div class="btn" style="left:2400px;top:1380px;width:64px;height:64px"></div>
<svg style="left:2418px;top:1395px" width="28" height="31" viewBox="0 0 28 31"><rect x="1.100" y="4.500" width="25.800" height="25" rx="2.500" fill="none" stroke="#7d8186" stroke-width="2.200"/><path d="M1 10.500h26M7 0v6.500M21 0v6.500" stroke="#7d8186" stroke-width="2.200" fill="none"/><rect x="15.500" y="18.500" width="7.500" height="7.500" fill="#7d8186"/></svg>
<div class="btn" style="left:2472px;top:1380px;width:68px;height:64px"></div>
<svg style="left:2486.500px;top:1395px" width="34" height="34" viewBox="0 0 34 34"><circle cx="17" cy="17" r="12.600" fill="none" stroke="#7d8186" stroke-width="2.200"/><path d="M17 9V18H24" fill="none" stroke="#7d8186" stroke-width="2.200"/></svg>
<div class="btn" style="left:2548px;top:1380px;width:64px;height:64px"></div>
<svg style="left:2576px;top:1404px" width="9" height="16" viewBox="0 0 9 16"><path d="M0 0l9 8-9 8z" fill="#7d8186"/></svg>
<!-- range buttons -->
<div class="btn" style="left:1016px;top:1596px;width:488px;height:48px;overflow:hidden"></div>
<div class="a" style="left:1224px;top:1596px;width:70px;height:48px;background:#6c95b8"></div>
<div class="vl" style="left:1082px;top:1598px;height:44px;background:#2f3439"></div>
<div class="vl" style="left:1154px;top:1598px;height:44px;background:#2f3439"></div>
<div class="vl" style="left:1364px;top:1598px;height:44px;background:#2f3439"></div>
<div class="vl" style="left:1428px;top:1598px;height:44px;background:#2f3439"></div>
<span class="t" style="left:1034.8px;top:1606.5px;letter-spacing:-1.38px;font-size:26.00px;color:#9a9a9a">1D</span>
<span class="t" style="left:1100.0px;top:1606.5px;letter-spacing:-0.50px;font-size:26.00px;color:#9a9a9a">1W</span>
<span class="t" style="left:1172.5px;top:1606.5px;letter-spacing:-0.56px;font-size:26.00px;color:#9a9a9a">1M</span>
<span class="t" style="left:1242.5px;top:1606.5px;letter-spacing:-0.56px;font-size:26.00px;color:#0c1218">3M</span>
<span class="t" style="left:1312.5px;top:1606.5px;letter-spacing:-0.56px;font-size:26.00px;color:#9a9a9a">6M</span>
<span class="t" style="left:1383.0px;top:1606.5px;letter-spacing:-1.91px;font-size:26.00px;color:#9a9a9a">1Y</span>
<span class="t" style="left:1445.5px;top:1606.5px;letter-spacing:-1.76px;font-size:26.00px;color:#9a9a9a">ALL</span>
<div class="btn" style="left:1536px;top:1596px;width:208px;height:48px"></div>
<div class="vl" style="left:1696px;top:1598px;height:44px;background:#2f3439"></div>
<span class="t" style="left:1555.0px;top:1606.5px;letter-spacing:-2.20px;font-size:26.00px;color:#9a9a9a">CUSTOM</span>
<svg style="left:1668px;top:1616px" width="16" height="8" viewBox="0 0 16 8"><path d="M0 8h16L8 0z" fill="#9a9a9a"/></svg>
<svg style="left:1707px;top:1610px" width="24" height="20" viewBox="0 0 24 20"><rect x="1.100" y="1.100" width="21.800" height="17.400" rx="2" fill="none" stroke="#7d8186" stroke-width="2"/><path fill="#7d8186" d="M12 3.800l1.800 2h-3.600zM12 15.800l1.800-2h-3.600zM4.500 9.800l2-1.800v3.600zM19.500 9.800l-2-1.800v3.600z"/></svg>




<!-- ================= MODAL ================= -->

<div class="a" style="left:924px;top:300px;width:912px;height:1120px;background:#2d343d;border-radius:20px;overflow:hidden">
  <svg style="left:0;top:0" width="912" height="224" viewBox="924 300 912 224">
    <defs>
      <linearGradient id="gl" x1="924" y1="300" x2="1420" y2="524" gradientUnits="userSpaceOnUse"><stop offset="0" stop-color="#2d4152"/><stop offset=".55" stop-color="#233240"/><stop offset="1" stop-color="#1c2733"/></linearGradient>
      <linearGradient id="gm" x1="1230" y1="524" x2="1680" y2="300" gradientUnits="userSpaceOnUse"><stop offset="0" stop-color="#1a2430"/><stop offset=".5" stop-color="#151d28"/><stop offset="1" stop-color="#1b2531"/></linearGradient>
      <linearGradient id="gr" x1="1500" y1="524" x2="1836" y2="380" gradientUnits="userSpaceOnUse"><stop offset="0" stop-color="#1f2c3a"/><stop offset=".5" stop-color="#293a4b"/><stop offset="1" stop-color="#354a5e"/></linearGradient>
    </defs>
    <rect x="924" y="300" width="912" height="224" fill="url(#gl)"/>
    <path d="M1420.400 300 Q1367.700 417.200 1228.800 524 H1836 V300Z" fill="url(#gm)"/>
    <path d="M1674.500 300 Q1562.600 401.900 1493 524 H1836 V300Z" fill="url(#gr)"/>
  </svg>
</div>
<svg style="left:972px;top:364px" width="96" height="96" viewBox="0 0 24 24"><path fill="#e6e6e8" d="M20.500 6c-2.610.700-5.670 1-8.500 1s-5.890-.300-8.500-1L3 8c1.860.500 4 .830 6 1v13h2v-6h2v6h2V9c2-.170 4.140-.500 6-1l-.500-2zM12 6c1.100 0 2-.900 2-2s-.900-2-2-2-2 .900-2 2 .900 2 2 2z"/></svg>
<span class="t b" style="left:1101.0px;top:361.6px;letter-spacing:-2.13px;font-size:48.88px;color:#e8e8ea">User Preferences</span>
<span class="t" style="left:1101.0px;top:429.8px;letter-spacing:-0.93px;font-size:29.12px;color:#dedee0">Set things up just how you like them</span>
<div class="a" style="left:1628px;top:348px;width:160px;height:64px;background:#303842;border:2px solid #50575f;border-radius:8px"></div>
<svg style="left:1651.500px;top:372.500px" width="19" height="19" viewBox="0 0 19 19"><path d="M1.500 1.500l16 16M17.500 1.500l-16 16" stroke="#e0e0e2" stroke-width="2.800"/></svg>
<span class="t" style="left:1694.0px;top:366.3px;letter-spacing:-1.39px;font-size:29.12px;color:#dedee0">Close</span>
<!-- body -->
<span class="t" style="left:972.5px;top:576.3px;letter-spacing:-1.35px;font-size:29.12px;color:#dcdcde">Table size</span>
<div class="a" style="left:972px;top:612px;width:816px;height:64px;background:#323a45;border:2px solid #464e58;border-radius:7px"></div>
<svg style="left:999px;top:630px" width="24" height="28" viewBox="0 0 24 28"><path d="M0 2h24M0 10h24M0 18h24M0 26h24" stroke="#dcdcde" stroke-width="2.400"/></svg>
<span class="t" style="left:1043.5px;top:627.8px;letter-spacing:-1.00px;font-size:29.12px;color:#dcdcde">Compact</span>
<svg style="left:1748px;top:639px" width="15" height="10" viewBox="0 0 15 10"><path d="M0 0h15L7.500 10z" fill="#c2c2c4"/></svg>
<span class="t" style="left:972.5px;top:712.3px;letter-spacing:-1.42px;font-size:29.12px;color:#dcdcde">Theme</span>
<div class="a" style="left:972px;top:746px;width:816px;height:64px;background:#323a45;border:2px solid #464e58;border-radius:7px"></div>
<svg style="left:995px;top:762px" width="32" height="32" viewBox="0 0 24 24"><path fill="#e0e0e2" d="M12 3c-4.970 0-9 4.030-9 9s4.030 9 9 9 9-4.030 9-9c0-.460-.040-.920-.100-1.360-.980 1.370-2.580 2.260-4.400 2.260-2.980 0-5.400-2.420-5.400-5.400 0-1.810.890-3.420 2.260-4.400-.440-.060-.900-.100-1.360-.100z"/></svg>
<span class="t" style="left:1043.5px;top:763.8px;letter-spacing:-0.93px;font-size:29.12px;color:#dcdcde">Dark mode</span>
<svg style="left:1748px;top:773px" width="15" height="10" viewBox="0 0 15 10"><path d="M0 0h15L7.500 10z" fill="#c2c2c4"/></svg>
<div class="hl" style="left:924px;top:1258px;width:912px;background:#4c535b"></div>
<div class="a" style="left:972px;top:1308px;width:816px;height:64px;background:#90c6f4;border-radius:7px"></div>
<span class="t" style="left:1346.8px;top:1325.8px;letter-spacing:-1.39px;font-size:29.12px;color:#10161d">Close</span>


</div></div>
</body>
</html>
